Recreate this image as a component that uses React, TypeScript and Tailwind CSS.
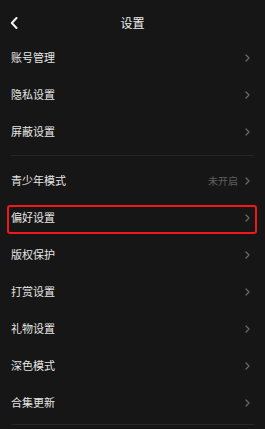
import React from "react";

const Chevron = () => (
  <svg width="5" height="8" viewBox="0 0 5 8" className="shrink-0">
    <path d="M1 1 L4 4 L1 7" fill="none" stroke="#6b6b6b" strokeWidth="1.2" strokeLinecap="round" strokeLinejoin="round" />
  </svg>
);

const Row = ({ label, value, highlight }: { label: string; value?: string; highlight?: boolean }) => (
  <div className="relative flex h-[37px] items-center justify-between pl-[11px] pr-[15px]">
    <span className="text-[11px] leading-none text-[#e6e6e6]">{label}</span>
    <div className="flex items-center gap-[7px]">
      {value && <span className="text-[10px] leading-none text-[#5e5e5e]">{value}</span>}
      <Chevron />
    </div>
    {highlight && (
      <div className="pointer-events-none absolute left-[7px] right-[8px] top-[6px] bottom-[2px] rounded-[3px] border-2 border-[#f01818]" />
    )}
  </div>
);

export default function App() {
  const first = ["账号管理", "隐私设置", "屏蔽设置"];
  return (
    <div
      className="h-[429px] w-[265px] overflow-hidden bg-[#161616]"
      style={{ fontFamily: '"Noto Sans CJK SC", "Noto Sans", sans-serif' }}
    >
      <div className="relative flex h-[39px] items-start justify-center pt-[16px]">
        <svg width="8" height="12" viewBox="0 0 8 12" className="absolute left-[10px] top-[17px]">
          <path d="M6.5 1 L1.8 6 L6.5 11" fill="none" stroke="#f2f2f2" strokeWidth="2" strokeLinecap="round" strokeLinejoin="round" />
        </svg>
        <span className="text-[12px] leading-[14px] text-[#f0f0f0]">设置</span>
      </div>
      {first.map((l) => (
        <Row key={l} label={l} />
      ))}
      <div className="mx-[11px] mt-[5px] mb-[6px] h-px bg-[#262626]" />
      <Row label="青少年模式" value="未开启" />
      <Row label="偏好设置" highlight />
      <Row label="版权保护" />
      <Row label="打赏设置" />
      <Row label="礼物设置" />
      <Row label="深色模式" />
      <Row label="合集更新" />
      <div className="mx-[11px] mt-[3px] h-px bg-[#262626]" />
    </div>
  );
}
